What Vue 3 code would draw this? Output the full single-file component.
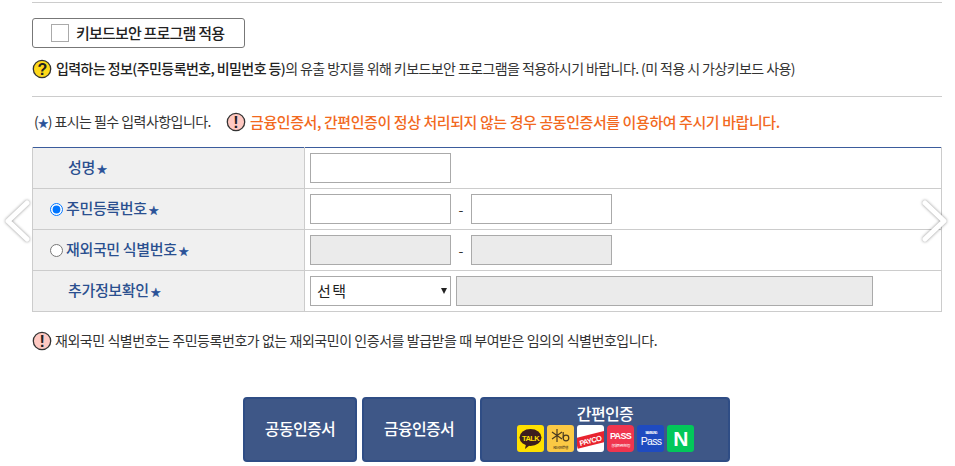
<template>
  <div class="page">
    <div class="hr first"></div>

    <label class="keyboard-btn">
      <span class="box"></span>
      <span class="btn-text">키보드보안 프로그램 적용</span>
    </label>

    <p class="notice">
      <svg class="icon" width="20" height="20" viewBox="0 0 20 20">
        <circle cx="10" cy="10" r="8.7" fill="#ffd91a" stroke="#333" stroke-width="1.3" />
        <text x="10" y="15.5" text-anchor="middle" class="icon-text">?</text>
      </svg>
      <span class="line"><b>입력하는 정보(주민등록번호, 비밀번호 등)</b>의 유출 방지를 위해 키보드보안 프로그램을 적용하시기 바랍니다. (미 적용 시 가상키보드 사용)</span>
    </p>

    <div class="hr"></div>

    <div class="required">
      <span class="req-text">(<i class="star">★</i>) 표시는 필수 입력사항입니다.</span>
      <svg class="icon" width="20" height="20" viewBox="0 0 20 20">
        <circle cx="10" cy="10" r="8.7" fill="#ffc9c2" stroke="#333" stroke-width="1.3" />
        <text x="10" y="15.5" text-anchor="middle" class="icon-text">!</text>
      </svg>
      <span class="warn">금융인증서, 간편인증이 정상 처리되지 않는 경우 공동인증서를 이용하여 주시기 바랍니다.</span>
    </div>

    <table class="form">
      <tbody>
        <tr>
          <th class="plain"><span class="label">성명<i class="star">★</i></span></th>
          <td><input class="field" type="text" /></td>
        </tr>
        <tr>
          <th>
            <label class="radio"><input type="radio" name="idType" checked /><span class="label">주민등록번호<i class="star">★</i></span></label>
          </th>
          <td>
            <div class="pair">
              <input class="field" type="text" />
              <span class="dash">-</span>
              <input class="field" type="text" />
            </div>
          </td>
        </tr>
        <tr>
          <th>
            <label class="radio"><input type="radio" name="idType" /><span class="label">재외국민 식별번호<i class="star">★</i></span></label>
          </th>
          <td>
            <div class="pair">
              <input class="field" type="text" disabled />
              <span class="dash">-</span>
              <input class="field" type="text" disabled />
            </div>
          </td>
        </tr>
        <tr>
          <th class="plain"><span class="label">추가정보확인<i class="star">★</i></span></th>
          <td>
            <div class="extra">
              <div class="select-wrap">
                <select class="field select">
                  <option>선택</option>
                </select>
                <span class="caret"></span>
              </div>
              <input class="field wide" type="text" disabled />
            </div>
          </td>
        </tr>
      </tbody>
    </table>

    <p class="foot-note">
      <svg class="icon" width="20" height="20" viewBox="0 0 20 20">
        <circle cx="10" cy="10" r="8.7" fill="#ffc9c2" stroke="#333" stroke-width="1.3" />
        <text x="10" y="15.5" text-anchor="middle" class="icon-text">!</text>
      </svg>
      <span class="line">재외국민 식별번호는 주민등록번호가 없는 재외국민이 인증서를 발급받을 때 부여받은 임의의 식별번호입니다.</span>
    </p>

    <div class="actions">
      <button class="action">공동인증서</button>
      <button class="action">금융인증서</button>
      <button class="action simple">
        <span class="simple-title">간편인증</span>
        <span class="logos">
          <svg class="logo" viewBox="0 0 27 27">
            <rect width="27" height="27" rx="3" fill="#ffe000" />
            <ellipse cx="13.5" cy="12.5" rx="11" ry="8.5" fill="#3c1e1e" />
            <path d="M9 19 L8 24 L13 20 Z" fill="#3c1e1e" />
            <text x="13.5" y="15.5" text-anchor="middle" class="t talk">TALK</text>
          </svg>
          <svg class="logo" viewBox="0 0 27 27">
            <rect width="27" height="27" rx="3" fill="#fbc944" />
            <path d="M10 4v13M5 7l10 7M15 7L5 14" stroke="#4a3a20" stroke-width="1.2" fill="none" />
            <circle cx="19" cy="13" r="2.8" stroke="#4a3a20" stroke-width="1.2" fill="none" />
            <path d="M16.2 7v6" stroke="#4a3a20" stroke-width="1.2" />
            <text x="13.5" y="23.5" text-anchor="middle" class="t kb">KB 국민은행</text>
          </svg>
          <svg class="logo" viewBox="0 0 27 27">
            <rect width="27" height="27" rx="3" fill="#fff" />
            <g transform="rotate(-14 13.5 15)">
              <rect x="-1" y="9.5" width="31" height="11" fill="#e8232e" />
              <text x="2" y="18.3" class="t payco">PAYCO</text>
            </g>
          </svg>
          <svg class="logo" viewBox="0 0 27 27">
            <rect width="27" height="27" rx="4" fill="#f0354e" />
            <text x="13.5" y="14" text-anchor="middle" class="t pass">PASS</text>
            <text x="13.5" y="21.5" text-anchor="middle" class="t pass-sub">휴대폰본인인증</text>
          </svg>
          <svg class="logo" viewBox="0 0 27 27">
            <rect width="27" height="27" rx="3" fill="#1f4bc0" />
            <text x="14" y="8.5" text-anchor="middle" class="t samsung">SAMSUNG</text>
            <text x="14" y="20" text-anchor="middle" class="t spass">Pass</text>
          </svg>
          <svg class="logo" viewBox="0 0 27 27">
            <rect width="27" height="27" rx="3" fill="#03c75a" />
            <text x="13.5" y="20.5" text-anchor="middle" class="t naver">N</text>
          </svg>
        </span>
      </button>
    </div>

    <svg class="arrow left" width="30" height="46" viewBox="0 0 30 46">
      <polyline points="25,5 6,23 25,41" />
    </svg>
    <svg class="arrow right" width="30" height="46" viewBox="0 0 30 46">
      <polyline points="5,5 24,23 5,41" />
    </svg>
  </div>
</template>

<script setup>
</script>

<style>
html,
body {
  margin: 0;
  background: #fff;
}
</style>

<style scoped>
.page {
  position: relative;
  width: 955px;
  height: 466px;
  box-sizing: border-box;
  padding: 2px 13px 0 32px;
  overflow: hidden;
  font-family: "Noto Sans CJK KR", "Noto Sans", sans-serif;
  font-size: 14px;
  color: #333;
}
.hr {
  height: 1px;
  background: #ccc;
}
.keyboard-btn {
  display: flex;
  align-items: center;
  gap: 7px;
  width: 213px;
  height: 30px;
  box-sizing: border-box;
  margin-top: 15px;
  padding-left: 18px;
  border: 1px solid #777;
  border-radius: 3px;
  font-size: 15px;
  font-weight: 500;
  letter-spacing: -0.8px;
  color: #222;
}
.btn-text {
  margin-bottom: 2px;
}
.box {
  width: 18px;
  height: 18px;
  box-sizing: border-box;
  border: 1px solid #aaa;
}
.notice {
  display: flex;
  align-items: center;
  gap: 4px;
  height: 20px;
  margin: 11px 0 17px;
  letter-spacing: -0.58px;
  white-space: nowrap;
}
.line {
  margin-bottom: 2px;
}
.notice b {
  font-weight: 500;
  color: #222;
}
.icon {
  flex: none;
}
.icon-text {
  font-family: "Liberation Sans", sans-serif;
  font-size: 16px;
  font-weight: 700;
  fill: #222;
}
.required {
  display: flex;
  align-items: center;
  height: 20px;
  margin-top: 15px;
  padding-left: 2px;
  white-space: nowrap;
}
.req-text {
  width: 192px;
  margin-bottom: 2px;
  letter-spacing: -0.55px;
}
.star {
  font-style: normal;
  font-size: 10px;
  color: #2a5298;
  -webkit-text-stroke: 0.3px #2a5298;
}
.warn {
  margin-left: 4px;
  margin-bottom: 2px;
  font-size: 15px;
  font-weight: 500;
  letter-spacing: -0.42px;
  color: #f2691e;
}
.form {
  width: 910px;
  margin-top: 15px;
  border-collapse: collapse;
  border-top: 1px solid #3b5c9c;
  table-layout: fixed;
}
.form th,
.form td {
  height: 40px;
  padding: 0;
  border: 1px solid #ccc;
  box-sizing: content-box;
}
.form tr:first-child th,
.form tr:first-child td {
  border-top: 0;
}
.form th {
  width: 272px;
  padding-left: 17px;
  box-sizing: border-box;
  background: #f0f0f0;
  text-align: left;
  font-size: 15px;
  font-weight: 500;
  letter-spacing: -0.35px;
  color: #2a4f8f;
  white-space: nowrap;
}
.form th.plain {
  padding-left: 35px;
}
.label {
  display: inline-block;
  margin-bottom: 3px;
}
.label .star {
  margin-left: 2px;
}
.form td {
  padding-left: 5px;
}
.radio {
  display: flex;
  align-items: center;
  gap: 3px;
}
.radio input {
  width: 13px;
  height: 13px;
  margin: 0;
}
.field {
  width: 141px;
  height: 30px;
  box-sizing: border-box;
  display: block;
  margin: 0;
  border: 1px solid #aaa;
  border-radius: 0;
  background: #fff;
  font-family: inherit;
}
.field:disabled {
  background: #ebebeb;
}
.pair {
  display: flex;
  align-items: center;
}
.dash {
  width: 20px;
  text-align: center;
}
.extra {
  display: flex;
  gap: 5px;
}
.select-wrap {
  position: relative;
}
.select {
  appearance: none;
  padding: 0 0 2px 6px;
  font-size: 15px;
  letter-spacing: 1.5px;
  color: #222;
}
.caret {
  position: absolute;
  top: 12px;
  left: 131px;
  width: 0;
  height: 0;
  border-left: 3px solid transparent;
  border-right: 3px solid transparent;
  border-top: 6px solid #222;
  pointer-events: none;
}
.wide {
  width: 417px;
}
.foot-note {
  display: flex;
  align-items: center;
  gap: 3px;
  height: 20px;
  margin: 19px 0 0;
  letter-spacing: -0.45px;
  white-space: nowrap;
}
.actions {
  display: flex;
  gap: 5px;
  margin-top: 46px;
  padding-left: 211px;
}
.action {
  width: 114px;
  height: 65px;
  margin: 0;
  padding: 0 0 3px;
  border: 2px solid #2f4d85;
  border-radius: 4px;
  background: #3e5787;
  color: #fff;
  font-family: inherit;
  font-size: 16px;
  font-weight: 500;
  letter-spacing: -0.65px;
}
.simple {
  display: flex;
  flex-direction: column;
  align-items: center;
  width: 250px;
  margin-left: -1px;
  padding: 0;
}
.simple-title {
  line-height: 22px;
  margin-top: 3px;
}
.logos {
  display: flex;
  gap: 3px;
  margin-top: 1px;
}
.logo {
  width: 27px;
  height: 27px;
}
.t {
  font-family: "Liberation Sans", sans-serif;
  fill: #fff;
}
.talk {
  font-size: 7.5px;
  font-weight: 700;
  fill: #ffe000;
}
.kb {
  font-family: "Noto Sans CJK KR", sans-serif;
  font-size: 3.6px;
  fill: #4a3a20;
}
.payco {
  font-size: 7.5px;
  font-weight: 700;
}
.pass {
  font-size: 9px;
  font-weight: 700;
}
.pass-sub {
  font-family: "Noto Sans CJK KR", sans-serif;
  font-size: 3.6px;
}
.samsung {
  font-size: 3.2px;
  font-weight: 700;
}
.spass {
  font-size: 10.5px;
}
.naver {
  font-size: 21px;
  font-weight: 700;
}
.arrow {
  position: absolute;
  top: 198px;
  fill: none;
  stroke: #fff;
  stroke-width: 5;
  stroke-linecap: round;
  stroke-linejoin: round;
  filter: drop-shadow(0 0 1.5px rgba(0, 0, 0, 0.45));
}
.arrow.left {
  left: 2px;
}
.arrow.right {
  left: 920px;
}
</style>
